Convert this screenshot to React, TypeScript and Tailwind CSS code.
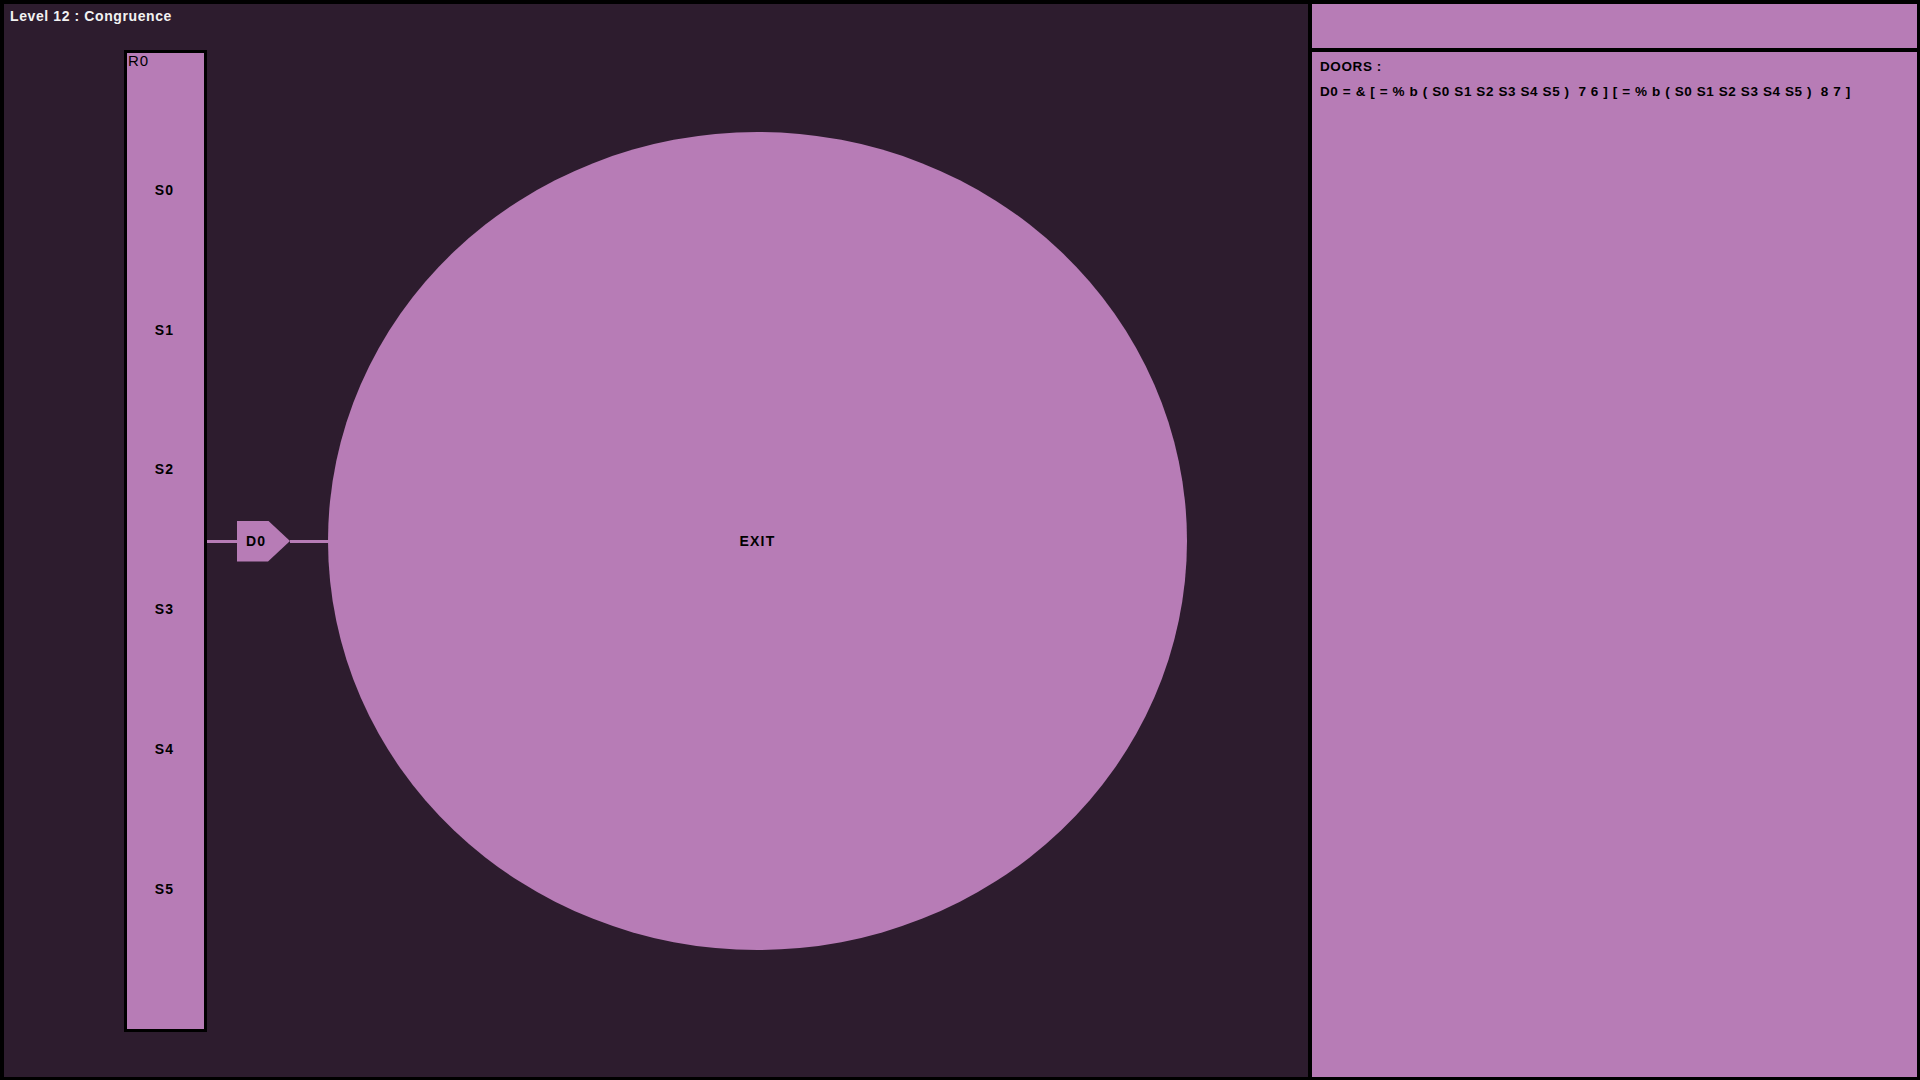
const slots = ["S0", "S1", "S2", "S3", "S4", "S5"];

const doorRule =
  "D0 = & [ = % b ( S0 S1 S2 S3 S4 S5 )  7 6 ] [ = % b ( S0 S1 S2 S3 S4 S5 )  8 7 ]";

const Room = () => (
  <div className="relative w-[83px] h-[982px] border-[3px] border-black bg-[#b77cb6] shrink-0">
    <div className="absolute left-[1px] top-0 text-[15px] leading-[15px] tracking-[1px] text-black">R0</div>
    <div className="flex flex-col pt-[67px]">
      {slots.map((s) => (
        <div key={s} className="h-[139.8px] flex items-center justify-center pr-[2px]">
          <span className="text-[14px] leading-[16px] font-bold tracking-[1.2px] text-black">{s}</span>
        </div>
      ))}
    </div>
  </div>
);

const Door = () => (
  <div className="flex items-center shrink-0">
    <div className="w-[30px] h-[3px] bg-[#b77cb6]" />
    <div className="w-[53px] h-[41px] bg-[#b77cb6] flex items-center pl-[9px] [clip-path:polygon(0_0,31px_0,100%_50%,31px_100%,0_100%)]">
      <span className="text-[14px] leading-[16px] font-bold tracking-[1.2px] text-black">D0</span>
    </div>
    <div className="w-[38px] h-[3px] bg-[#b77cb6]" />
  </div>
);

const App = () => {
  return (
    <div className="w-[1920px] h-[1080px] bg-black flex gap-[4px] pt-[4px] pl-[4px] pr-[3px] pb-[3px] font-['Liberation_Sans',Arial,sans-serif] overflow-hidden">
      <div className="w-[1304px] h-full bg-[#2d1c2e] flex flex-col shrink-0">
        <div className="h-[46px] pt-[4px] pl-[6px] text-[14px] leading-[16px] font-bold tracking-[0.6px] text-[#f2f2f2]">
          Level 12 : Congruence
        </div>
        <div className="flex items-center pl-[120px]">
          <Room />
          <Door />
          <div className="w-[859px] h-[818px] rounded-[50%] bg-[#b77cb6] flex items-center justify-center shrink-0">
            <span className="text-[14px] leading-[16px] font-bold tracking-[1.2px] text-black">EXIT</span>
          </div>
        </div>
      </div>
      <div className="flex-1 h-full flex flex-col gap-[4px]">
        <div className="h-[44px] bg-[#b77cb6]" />
        <div className="flex-1 bg-[#b77cb6] pt-[2px] pl-[8px] text-[13.5px] leading-[25px] font-bold tracking-[0.6px] text-black">
          <div>DOORS :</div>
          <div className="whitespace-pre">{doorRule}</div>
        </div>
      </div>
    </div>
  );
};

export default App;
